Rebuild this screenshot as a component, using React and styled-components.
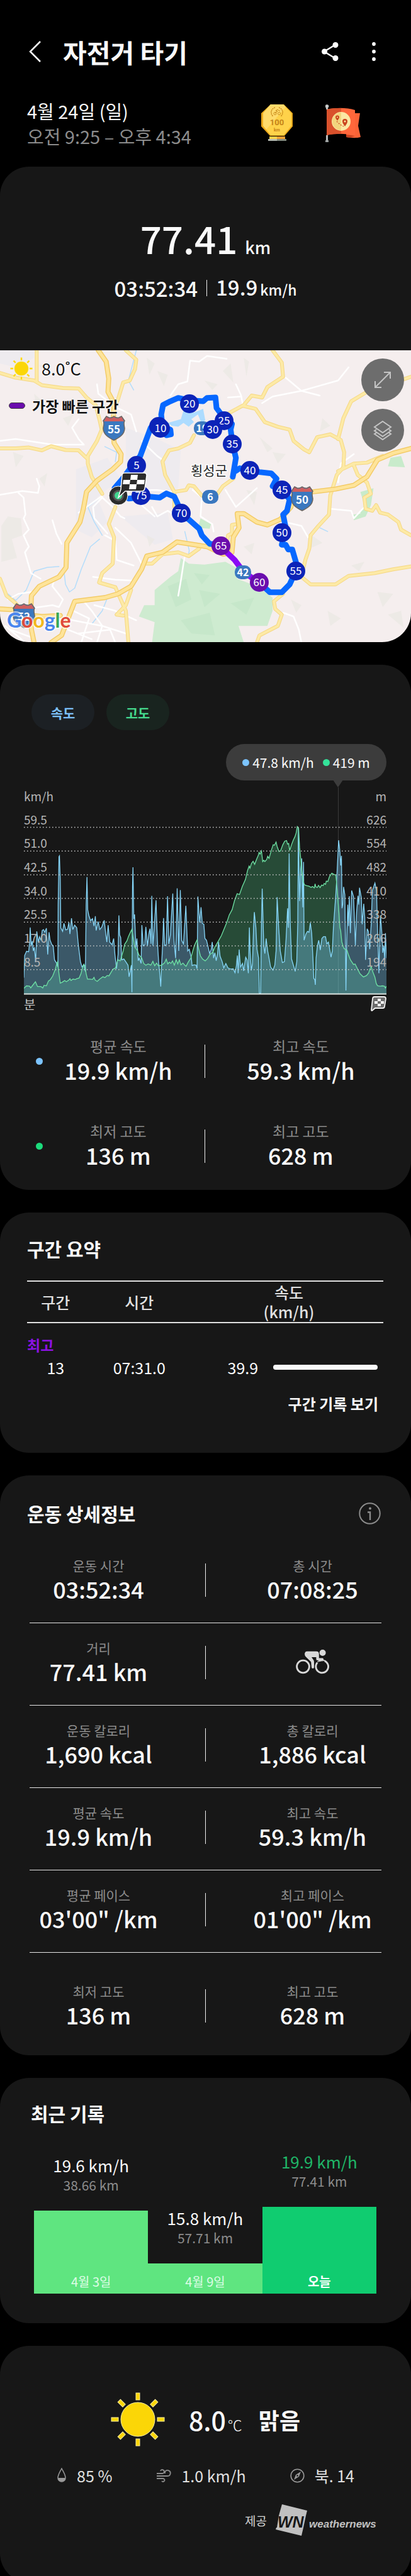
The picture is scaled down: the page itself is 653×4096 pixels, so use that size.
import React from "react";
import styled, { createGlobalStyle } from "styled-components";

const GlobalStyle = createGlobalStyle`
	* {
		box-sizing: border-box;
	}
	body {
		margin: 0;
		background: #000;
		color: #fafafa;
		font-family: "Noto Sans CJK KR", "Noto Sans", sans-serif;
	}
	button {
		padding: 0;
		border: none;
		background: none;
		color: inherit;
		font: inherit;
		cursor: pointer;
	}
	svg {
		display: block;
	}
`;

/**
 * Page and header
 */
const Page = styled.main`
	display: flex;
	flex-direction: column;
	gap: 36px;
	overflow: hidden;
`;

const TopBar = styled.header`
	display: flex;
	align-items: center;
	height: 48px;
	margin: 58px 42px 50px 40px;
`;

const IconButton = styled.button`
	display: flex;
	align-items: center;
	justify-content: center;
	width: ${({ $width }) => $width || 32}px;
	height: 48px;
`;

const PageTitle = styled.h1`
	flex: 1;
	margin: 0 0 0 28px;
	font-size: 41px;
	line-height: 48px;
	font-weight: 700;
`;

const Actions = styled.div`
	display: flex;
	gap: 37px;
`;

const Session = styled.div`
	display: flex;
	justify-content: space-between;
	align-items: center;
	padding: 0 80px 29px 43px;
`;

const SessionText = styled.div`
	font-size: 29px;
	line-height: 40px;
	color: ${({ $muted }) => ($muted ? "#8c8c8c" : "#fafafa")};
`;

const Awards = styled.div`
	display: flex;
	gap: 52px;
`;

/**
 * Cards
 */
const Card = styled.section`
	padding: ${({ $pad }) => $pad || "0"};
	border-radius: 46px;
	background: #171717;
`;

const LastCard = styled(Card)`
	margin-bottom: -10px;
`;

const CardHead = styled.div`
	display: flex;
	justify-content: space-between;
	align-items: center;
	height: 40px;
	padding: 0 48px 0 ${({ $indent }) => $indent || 43}px;
`;

const CardTitle = styled.h2`
	margin: 0;
	font-size: 30px;
	line-height: 40px;
	font-weight: 700;
`;

/**
 * Hero
 */
const Hero = styled.div`
	display: flex;
	flex-direction: column;
	align-items: center;
	gap: 9px;
	height: 292px;
	padding-top: 77px;
	border-radius: 46px 46px 0 0;
	background: #171717;
`;

const Distance = styled.div`
	font-size: 60px;
	line-height: 72px;
	font-weight: 500;

	small {
		margin-left: 12px;
		font-size: 27px;
	}
`;

const HeroLine = styled.div`
	display: flex;
	align-items: center;
	gap: 14px;
	font-size: 33px;
	line-height: 36px;
	font-weight: 500;

	small {
		margin-left: 4px;
		font-size: 23px;
	}
`;

const Divider = styled.span`
	width: 1px;
	height: ${({ $height }) => $height}px;
	background: #f0f0f0;
`;

/**
 * Map
 */
const MapFrame = styled.div`
	position: relative;
	overflow: hidden;
	border-radius: 0 0 46px 46px;
	background: #f5eeee;

	> svg {
		width: 100%;
	}
`;

const MapInfo = styled.div`
	position: absolute;
	top: 8px;
	left: 14px;
	display: flex;
	flex-direction: column;
	gap: 20px;
	color: #111;
`;

const MapWeather = styled.div`
	display: flex;
	align-items: center;
	gap: 14px;
	padding-left: 2px;
	font-size: 27px;
	line-height: 42px;
	text-shadow: 0 0 3px #fff, 0 0 3px #fff;
`;

const Legend = styled.div`
	display: flex;
	align-items: center;
	gap: 11px;
	font-size: 23px;
	line-height: 36px;
	font-weight: 700;
	text-shadow: 0 0 3px #fff, 0 0 3px #fff;
`;

const LegendSwatch = styled.span`
	width: 26px;
	height: 10px;
	border: 1px solid #444;
	border-radius: 5px;
	background: #6a0dad;
`;

const MapButtons = styled.div`
	position: absolute;
	top: 13px;
	right: 11px;
	display: flex;
	flex-direction: column;
	gap: 12px;
`;

const RoundButton = styled.button`
	display: flex;
	align-items: center;
	justify-content: center;
	width: 68px;
	height: 68px;
	border-radius: 50%;
	background: #6d6d6d;
`;

/**
 * Chart card
 */
const Chips = styled.div`
	display: flex;
	gap: 19px;
	padding-left: 50px;
`;

const Chip = styled.button`
	width: 100px;
	height: 57px;
	border-radius: 29px;
	background: ${({ $bg }) => $bg};
	color: ${({ $color }) => $color};
	font-size: 21px;
	font-weight: 700;
`;

const ChartWrap = styled.div`
	display: flex;
	flex-direction: column;
	padding: 22px 39px 0 38px;

	> svg {
		width: 100%;
	}
`;

const Tooltip = styled.div`
	position: relative;
	align-self: flex-end;
	display: flex;
	align-items: center;
	justify-content: center;
	gap: 5px;
	width: 255px;
	height: 58px;
	margin-bottom: 11px;
	border-radius: 29px;
	background: #3c3c3c;
	font-size: 21px;

	&::after {
		content: "";
		position: absolute;
		top: 57px;
		left: 170px;
		border: 8px solid transparent;
		border-top: 12px solid #3c3c3c;
		border-bottom: none;
	}

	span + i {
		margin-left: 9px;
	}
`;

const Dot = styled.i`
	flex: none;
	width: 11px;
	height: 11px;
	border-radius: 50%;
	background: ${({ $color }) => $color};
`;

const ChartFoot = styled.div`
	display: flex;
	justify-content: space-between;
	align-items: center;
	height: 28px;
	color: #c4c4c4;
	font-size: 20px;
`;

const AxisText = styled.text`
	fill: #b5b5b5;
	font-size: 19px;
`;

const ChartStats = styled.div`
	display: flex;
	flex-direction: column;
	gap: 58px;
	padding: 39px 23px 0 51px;
`;

/* the dot sits in a zero-width column, beside the centred text */
const ChartStat = styled.div`
	display: grid;
	grid-template-columns: 0 9fr 1px 10fr;
	align-items: center;

	> i {
		margin-left: 6px;
	}
`;

const Metric = styled.div`
	text-align: center;
`;

const MetricLabel = styled.div`
	color: #8c8c8c;
	font-size: ${({ $size }) => $size || 21}px;
	line-height: 28px;
`;

const MetricValue = styled.div`
	font-size: 36px;
	line-height: ${({ $height }) => $height || 46}px;
	font-weight: 500;
	white-space: nowrap;
`;

/**
 * Section table
 */
const Laps = styled.table`
	width: calc(100% - 87px);
	margin: 31px 44px 0 43px;
	border-collapse: collapse;
	table-layout: fixed;
	font-size: 25px;
	text-align: center;

	th,
	td {
		padding: 0;
	}

	th {
		height: 66px;
		border-top: 2px solid #e0e0e0;
		border-bottom: 2px solid #e0e0e0;
		color: #e0e0e0;
		font-weight: 500;
		line-height: 31px;
	}

	td {
		height: 36px;
		line-height: 36px;
	}

	th:nth-child(1) {
		width: 16%;
	}
	th:nth-child(2) {
		width: 31%;
	}
`;

const BestTag = styled.td`
	&& {
		height: 52px;
		padding-top: 16px;
		color: #8b12e3;
		font-size: 23px;
		font-weight: 700;
		text-align: left;
	}
`;

const Speed = styled.div`
	display: flex;
	align-items: center;
	justify-content: flex-end;
	gap: 24px;
	padding-right: 9px;
`;

const SpeedBar = styled.span`
	width: 57%;
	height: 8px;
	border-radius: 4px;
	background: #fafafa;
`;

const MoreButton = styled.button`
	display: block;
	margin: 22px 52px 0 auto;
	font-size: 24px;
	line-height: 36px;
	font-weight: 700;
`;

/**
 * Details
 */
const DetailList = styled.div`
	padding: 24px 47px 0;
`;

const DetailRow = styled.div`
	display: grid;
	grid-template-columns: 1fr 1px 1fr;
	column-gap: 60px;
	align-items: center;
	justify-items: center;
	padding: 25px 0 31px;
	border-bottom: 1px solid #e6e6e6;

	&:last-child {
		padding-top: 47px;
		border-bottom: none;
	}
`;

/**
 * Recent records
 */
const Bars = styled.div`
	display: flex;
	align-items: flex-end;
	margin: 39px 55px 0 54px;
`;

const BarColumn = styled.div`
	flex: 1;
	text-align: center;
`;

const BarSpeed = styled.div`
	font-size: 26px;
	line-height: 36px;
	color: ${({ $today }) => ($today ? "#1fb768" : "#fafafa")};
`;

const BarDistance = styled.div`
	margin-bottom: 28px;
	color: #8c8c8c;
	font-size: 21px;
	line-height: 26px;
`;

const Bar = styled.div`
	display: flex;
	align-items: flex-end;
	justify-content: center;
	padding-bottom: 6px;
	background: ${({ $today }) => ($today ? "#10cc70" : "#5fe580")};
	color: ${({ $today }) => ($today ? "#fff" : "#dcfce5")};
	font-size: 20px;
	line-height: 26px;
	font-weight: ${({ $today }) => ($today ? 700 : 400)};
`;

/**
 * Weather
 */
const WeatherNow = styled.div`
	display: flex;
	align-items: center;
	justify-content: center;
	height: 86px;
	font-weight: 500;
`;

const Temperature = styled.span`
	margin-left: 38px;
	font-size: 41px;

	small {
		margin-left: 3px;
		font-size: 23px;
		font-weight: 300;
	}
`;

const Condition = styled.strong`
	margin-left: 26px;
	font-size: 36px;
`;

const WeatherFacts = styled.ul`
	display: flex;
	justify-content: center;
	gap: 70px;
	margin: 28px 0;
	padding: 0;
	list-style: none;
	color: #e0e0e0;
	font-size: 25px;
	line-height: 36px;

	li {
		display: flex;
		align-items: center;
		gap: 16px;
	}
`;

const Provider = styled.div`
	display: flex;
	align-items: center;
	justify-content: flex-end;
	gap: 14px;
	padding-right: 51px;
	color: #d6d6d6;
	font-size: 19px;
`;

/**
 * Icons
 */
function SunIcon({ size }) {
	return (
		<svg width={size} height={size} viewBox="0 0 86 86">
			<g fill="#fbd607" stroke="#fdf0a0" strokeWidth="1">
				<circle cx="43" cy="43" r="27" />
				{[0, 45, 90, 135, 180, 225, 270, 315].map((angle) => (
					<rect
						key={angle}
						x="40"
						y="1"
						width="6"
						height="11"
						transform={`rotate(${angle} 43 43)`}
					/>
				))}
			</g>
		</svg>
	);
}

function MedalIcon() {
	return (
		<svg width="50" height="58" viewBox="0 0 50 58">
			<path d="M15 0h21l14 14v21L37 50H14L0 35V14z" fill="#eda91a" />
			<path d="M15 0h20l13 14v20L36 49H15L3 34V14z" fill="#ffd24a" />
			<path d="M15 0h20l4 4L8 40l-5-6V14z" fill="#ffdb6b" />
			<path d="M13 51h25v4H13z" fill="#f3a134" />
			<path d="M13 51h12v4H13z" fill="#ffd24a" />
			<path d="M11 55h29v3H11z" fill="#848c80" />
			<path d="M11 55h14v3H11z" fill="#b5bab2" />
			<g fill="none" stroke="#c98b1b" strokeWidth="1">
				<path
					d="M22 5c-7 2-8 10-3 14M28 5c7 2 8 10 3 14"
					strokeDasharray="2 1"
					strokeWidth="1.6"
				/>
				<circle cx="22" cy="14.500" r="2" />
				<circle cx="28.500" cy="14.500" r="2" />
				<path d="M22 14l4-3-3-1 3-2 2 2h2" />
			</g>
			<text
				x="25"
				y="33"
				textAnchor="middle"
				fontFamily="Roboto, sans-serif"
				fontSize="13"
				fontWeight="700"
				fill="#c58418"
			>
				100
			</text>
			<text
				x="25"
				y="43"
				textAnchor="middle"
				fontFamily="Roboto, sans-serif"
				fontSize="7"
				fontWeight="700"
				fill="#c58418"
			>
				km
			</text>
		</svg>
	);
}

function FlagIcon() {
	return (
		<svg width="56" height="60" viewBox="0 0 56 60">
			<path d="M46 14h9l-3 20 4 18c-8 2-15 1-23 0V40z" fill="#fb6437" />
			<path d="M33 48l14 2c-4 2-9 3-14 2z" fill="#c7421f" />
			<path d="M2 8c15-3 32-3 45 1v41c-15-4-30-4-45-1z" fill="#ff673b" />
			<path d="M2 8c8-2 15-2 23-2v41c-8 0-15 0-23 2z" fill="#d9512c" />
			<circle cx="25" cy="27" r="15" fill="#fbe8a4" />
			<path d="M25 13a14 14 0 0 0 0 28z" fill="#f2d57e" />
			<path
				d="M31 35c-3-4-4-6-4-8a4 4 0 0 1 8 0c0 2-1 4-4 8zM19 26c-2-3-3-4-3-5.500a3 3 0 0 1 6 0c0 1.500-1 2.500-3 5.500z"
				fill="#c9431e"
			/>
			<circle cx="31" cy="27" r="1.500" fill="#fbe6a1" />
			<circle cx="19" cy="20.500" r="1" fill="#fbe6a1" />
			<path
				d="M18 27l3 3 4 3 4 2"
				fill="none"
				stroke="#c9431e"
				strokeWidth="1.200"
				strokeDasharray="2 2"
			/>
			<path d="M1 5h3v3H1zM1 49h3v9H1z" fill="#b9bdbd" />
			<circle cx="2.500" cy="3" r="2.800" fill="#c6c9c9" />
			<path d="M0 57h5v3H0z" fill="#9da1a1" />
		</svg>
	);
}

function ShareIcon() {
	return (
		<svg width="27" height="30" viewBox="0 0 27 30" fill="#fff">
			<path d="M22 4L4 15l18 11" fill="none" stroke="#fff" strokeWidth="2.500" />
			<circle cx="22" cy="4.500" r="4.500" />
			<circle cx="4.500" cy="15" r="4.500" />
			<circle cx="22" cy="25.500" r="4.500" />
		</svg>
	);
}

function BikeIcon() {
	return (
		<svg width="54" height="40" viewBox="0 0 54 40" fill="#d9d9d9">
			<g fill="none" stroke="#d9d9d9" strokeWidth="2.800">
				<circle cx="11.500" cy="27" r="9.900" />
				<circle cx="41.700" cy="27" r="9.900" />
			</g>
			<path d="M32 18.500h6l6-1 2-1-1 3-10 2z" fill="#171717" />
			<path d="M34 19.500q6-2 12-2" fill="none" stroke="#d9d9d9" />
			<path d="M18 2.700h14.500q4.300 0 4.300 4.300v6.500h5.700q1.500.2 1.500 1.700t-1.500 1.700H34q-1.600 0-1.600-1.700V12H25l3.400 5q.6 1 .6 2.500V28q0 2-2 2t-2-2l-.8-8.500-7.700-7.500q-2.500-2.500-2.500-5 .4-4.300 4-4.300z" />
			<circle cx="42.600" cy="5" r="5" />
		</svg>
	);
}

/**
 * Route map
 */
const highways = [
	"M375 20L405 80 415 170 412 240 435 300 432 400 435 510 462 570 460 610 430 650 370 710 330 770 318 860 305 930 255 1040 252 1170 225 1220 150 1270 120 1320 117 1400 120 1500 130 1568",
	"M1568 540L1500 565 1440 600 1400 690 1350 735 1280 755 1190 770 1120 790 1110 850 1070 915 1020 945 980 930 930 885 905 885 912 960 890 1010 885 1090 850 1100 790 1060 675 1035 620 1090 560 1110 540 1180 500 1270 450 1310 400 1330 285 1350 260 1440 235 1530 195 1568",
	"M0 1390L60 1395 90 1420 160 1430 230 1425",
];

const roads = [
	"M0 140L60 165 130 180 160 205 240 220 300 222 330 270 365 310 380 390 388 440 370 500 335 580 335 620 350 690 390 780",
	"M140 20V180",
	"M480 20L520 70 515 120 495 180 470 190 450 280 430 340",
	"M0 540L60 540 110 535 160 550 195 528 250 548 300 550 330 590",
	"M1040 20L1075 85 1080 160 1020 215 1000 270 960 260 930 310 870 355",
	"M930 315L975 330 1010 400 1060 425 1105 440 1120 500 1160 545 1180 560 1210 480 1260 465 1300 495 1313 560 1310 640 1285 680 1260 790 1255 890 1215 950 1185 1000 1180 1070 1165 1130 1150 1220 1185 1260 1280 1260 1330 1215 1430 1200 1500 1180 1568 1165",
	"M1290 490L1310 380 1340 290 1400 240 1568 160",
	"M1290 660L1350 620 1400 615 1460 580",
	"M1350 630L1365 680 1400 720 1415 780 1390 800 1395 860 1420 870 1435 840 1450 880 1480 890 1520 930 1530 970 1568 1000",
	"M740 470L725 510 680 540 645 550 620 610 630 680 665 770 710 760 720 735 740 740 770 790 830 780 850 740 890 700",
	"M665 780L665 850 690 880",
	"M440 850L415 940 435 1010 430 1150 390 1200 378 1250 440 1275 480 1400 490 1568",
	"M500 1290L480 1370 445 1420 470 1425",
	"M905 940L885 945 885 990 870 1000 860 1100",
	"M550 1150L580 1150 620 1100 680 1090 720 1110 760 1070",
	"M1080 1310L1045 1350 1050 1390 1075 1420 1060 1480 990 1530 980 1568",
	"M0 1230L25 1320 60 1360 80 1400",
];

const lanes = [
	"M650 260L680 200 715 185 725 75 760 80 790 50 865 65",
	"M1090 165L1150 235 1290 180 1330 110",
	"M1000 300L1040 265 1150 235 1220 260",
	"M300 385L275 430 300 490 320 520 200 520 60 490 0 500",
	"M370 200L375 250 440 320 500 360 520 450",
	"M0 785L85 765 145 775 150 740 140 700",
	"M70 775L90 800 97 890 90 910 110 970 90 1000 110 1060 95 1090 118 1200 155 1230",
	"M200 920L215 990 235 1045",
	"M440 960L500 1040 540 1150",
	"M680 1320L690 1240 700 1150 705 1110",
	"M735 760L770 800 765 900 810 940 815 980",
	"M540 500L600 580 620 600",
	"M390 790L340 840 300 880",
	"M390 800L355 850 360 910 410 990",
	"M390 800L430 850 460 900 475 910",
	"M400 1000L440 1030 445 1130 510 1160",
	"M580 850L600 900 640 870 700 920",
	"M1265 860L1340 870 1350 910 1390 850",
	"M1290 720L1300 620 1350 570",
	"M860 760L900 850 980 750",
	"M1090 930L1150 950 1175 1010",
	"M30 1340L70 1310 120 1300 140 1290",
	"M100 1390L200 1370 225 1380 240 1340 200 1270 210 1220",
	"M280 1400L340 1440 310 1568M240 1440L390 1480 370 1568M300 1520L420 1500 440 1568M260 1500L350 1550",
	"M320 1350L350 1400 390 1480 480 1520M360 1370L440 1400 520 1450",
	"M40 1500L120 1540M20 1480L90 1560",
	"M1080 1410L1120 1430 1140 1500 1150 1568",
	"M900 200L920 260 925 300",
	"M870 270L920 265",
	"M480 760L600 760 660 770M540 840L590 900",
	"M355 1220L440 1235 510 1240",
];

const streams = [
	"M520 20L490 180 510 230",
	"M400 530L445 560 440 610",
	"M30 1310L60 1345 100 1290 130 1190 180 1170 225 1165",
	"M245 1200L250 1260 265 1300 285 1280 310 1180 345 1060 380 1020",
	"M390 790L335 850 360 930 390 1000",
	"M410 1330L390 1400 350 1470",
	"M1220 960L1250 980",
	"M705 980L722 1080 720 1100",
];

const hills = [
	"M560 60l30 30-20 60zM600 130l40 20-15 60zM850 130l30-40 10 100zM930 60l20 20-10 80zM780 180l50 20-20 30z",
	"M50 560l40 20-30 60zM130 250l40 50-30 30zM240 380l40-20-20 60zM150 100l30-10-10 40z",
	"M1230 380l30 40-40 30zM1430 240l30-40 10 90zM1490 350l40 10-20 60zM1040 560l50 10-30 50zM990 480l50 60-20 20z",
	"M1190 1000l40 40-50 30zM930 1060l40-20-10 60zM1440 1300l60 10-40 70zM1340 1160l50-20-20 50zM1250 1400l50 40-40 40zM1480 1420l50-20 10 90z",
	"M30 900l50 10 5 90-40 20 20 100-60 20V950zM150 700l30-30-10 70zM560 1000l30 20-20 40zM940 760l40 10-10 70zM1110 1340l40 30-20 40z",
];

const markers = [
	[5, 217, 183],
	[10, 255, 124],
	[20, 301, 85],
	[25, 356, 112],
	[30, 338, 126],
	[35, 369, 149],
	[40, 397, 191],
	[45, 448, 222],
	[50, 448, 290],
	[55, 470, 351],
	[60, 412, 369, true],
	[65, 351, 311, true],
	[70, 288, 259],
	[75, 224, 231],
];

const MapLine = styled.path`
	fill: none;
	stroke-linejoin: round;
	stroke-linecap: round;
	vector-effect: non-scaling-stroke;
`;

const MapText = styled.text`
	text-anchor: middle;
	fill: #fff;
`;

const PlaceName = styled(MapText)`
	fill: #222;
	stroke: #fff;
	stroke-width: 3px;
	paint-order: stroke;
	font-size: 21px;
`;

const MapBrand = styled.text`
	fill: #4a86ee;
	stroke: rgba(255, 255, 255, 0.6);
	stroke-width: 4px;
	paint-order: stroke;
	font-family: Lato, sans-serif;
	font-size: 32px;
	font-weight: 700;
`;

function Interstate({ x, y, children }) {
	return (
		<g transform={`translate(${x} ${y})`}>
			<path
				d="M-12-20l4 2q4 1 8-2 4 3 8 2l4-2 5 7c-2 3-1 7 0 12 0 10-9 15-17 19-8-4-17-9-17-19 1-5 2-9 0-12z"
				fill="#3b78bf"
				stroke="#6a6560"
				strokeWidth="1.500"
			/>
			<path d="M-12-19l4 2q4 1 8-2 4 3 8 2l4-2 4 7h-32z" fill="#cf5f5f" />
			<MapText y="7" fontSize="17" fontWeight="700">
				{children}
			</MapText>
		</g>
	);
}

function RouteMap() {
	return (
		<svg viewBox="0 0 653 464" role="img" aria-label="경로 지도">
			<g transform="scale(.41645 .3002) translate(0 -20)">
				<path
					d="M0 20h130v40L60 110 0 90zM480 430l120 60 90 60-10 200-60 40-60-20-80-100zM290 650l120-60 50 110-90 100 40 130-60 80-60-40zM460 900l180-20 20 140-70 30z"
					fill="#eeebef"
				/>
				<path d={hills.join("")} fill="#ebe8e3" opacity=".8" />
				<path
					d="M690 1120L720 1150 780 1155 860 1140 900 1170 905 1230 980 1270 1040 1330 1040 1400 1020 1480 910 1480 930 1568H580L590 1460 530 1430 550 1370 590 1370 590 1290 650 1220 680 1190z"
					fill="#ceebd0"
				/>
				<path
					d="M640 1270l70-40 20 110-60 40zM760 1290l80 20-60 70zM880 1360l90-30-30 90zM690 1450l110-40 20 120-90-10zM740 1200l60 10-30 50z"
					fill="#c6e7ca"
				/>
				<path
					d="M765 910l40 30-5 25-45-5zM1375 870l15-30-15-70 50-20-10 90-20 60-45 20-5-30 30-5zM1490 590l40-10 15 60-65-5z"
					fill="#c8ebcb"
				/>
				<path
					d="M640 405L690 385 700 340 740 350 775 330 783 390 770 410 755 360 730 385 740 400 720 425 700 405 680 425 655 420z"
					fill="#addcff"
				/>
				{streams.map((d) => (
					<MapLine key={d} d={d} stroke="#b4ddfb" strokeWidth="1.500" />
				))}
				{lanes.map((d) => (
					<MapLine key={d} d={d} stroke="#fff" strokeWidth="2.500" />
				))}
				{roads.map((d) => (
					<MapLine key={d} d={d} stroke="#f5d783" strokeWidth="6" />
				))}
				{roads.map((d) => (
					<MapLine key={d} d={d} stroke="#fdeaa6" strokeWidth="4" />
				))}
				{highways.map((d) => (
					<MapLine key={d} d={d} stroke="#f3cb67" strokeWidth="8" />
				))}
				{highways.map((d) => (
					<MapLine key={d} d={d} stroke="#fee49a" strokeWidth="5" />
				))}
				<MapLine
					d="M437 750L465 705 500 640 535 580 575 430 605 415 650 440 652 465 635 470 610 430 618 400 615 360 622 310 650 290 680 272 724 285 775 290 790 272 822 270 826 325 850 370 885 410 880 440 887 515 900 590 888 690 892 665 915 645 990 665 1035 672 1055 700 1040 740 1077 761 1105 810 1095 870 1080 890 1090 960 1075 1050 1090 1050 1100 1075 1115 1075 1135 1170 1105 1260 1075 1302 1030 1302 989 1251"
					stroke="#0768ff"
					strokeWidth="9"
				/>
				<MapLine
					d="M989 1251L930 1195 895 1130 842 1060"
					stroke="#8a0af5"
					strokeWidth="9"
				/>
				<MapLine
					d="M842 1050L800 1045 770 1000 760 965 695 885 665 795 635 778 610 800 570 795 490 805"
					stroke="#0768ff"
					strokeWidth="9"
				/>
			</g>

			<Interstate x={181} y={125}>55</Interstate>
			<Interstate x={480} y={237}>50</Interstate>
			<Interstate x={38} y={423}>52</Interstate>
			{[
				[19, 321, 124],
				[6, 334, 233],
				[42, 386, 353],
			].map(([label, x, y]) => (
				<g key={label}>
					<rect
						x={x - 13}
						y={y - 11}
						width="26"
						height="22"
						rx="10"
						fill="#3b78bf"
					/>
					<MapText x={x} y={y + 6} fontSize="16" fontWeight="700">
						{label}
					</MapText>
				</g>
			))}
			<PlaceName x="332" y="199">횡성군</PlaceName>
			<circle cx="252" cy="121" r="15" fill="#0c24b8" />
			{markers.map(([label, x, y, fastest]) => (
				<g key={label}>
					<circle cx={x} cy={y} r="15" fill={fastest ? "#6a0dad" : "#0c24b8"} />
					<MapText x={x} y={y + 6} fontSize="17">
						{label}
					</MapText>
				</g>
			))}

			<circle cx="188" cy="231" r="15" fill="#2b2b2b" stroke="#fff" />
			<circle cx="188" cy="231" r="9" fill="#555" />
			<circle cx="188" cy="231" r="6" fill="#41d68f" />
			<path
				d="M198 195h31q4 0 4 4l-3 21q-1 4-5 4h-26l-11 10 4-13 2-22q0-4 4-4z"
				fill="#2b2b2b"
				stroke="#fff"
				strokeWidth="1.500"
			/>
			<path
				d="M208 198h11l-1 8h-11zM196 206h11l-1 7h-11zM218 206h12l-1 7h-12zM206 213h11l-1 8h-11z"
				fill="#fff"
			/>

			<MapBrand x="11" y="441">
				G<tspan fill="#e04a3a">o</tspan><tspan fill="#f2b91d">o</tspan>g<tspan fill="#3aa757">l</tspan><tspan fill="#e04a3a">e</tspan>
			</MapBrand>
		</svg>
	);
}

/**
 * Speed and altitude chart, samples are [offset, height]
 */
const altitude = [
	[90, 30], [100, 44], [112, 42], [116, 32], [122, 44], [134, 67], [142, 40],
	[155, 40], [162, 32], [167, 47], [176, 44], [184, 72], [190, 77], [200, 99],
	[210, 137], [216, 172], [219, 180], [224, 112], [229, 59], [236, 64],
	[246, 74], [252, 67], [262, 77], [266, 84], [270, 74], [278, 82], [286, 79],
	[292, 84], [301, 88], [308, 112], [315, 150], [319, 164], [323, 157],
	[328, 112], [333, 82], [342, 82], [352, 80], [358, 92], [362, 77], [370, 69],
	[380, 82], [392, 95], [400, 90], [408, 102], [415, 100], [422, 117],
	[430, 137], [440, 144], [446, 177], [450, 190], [458, 184], [462, 202],
	[470, 242], [475, 277], [484, 297], [490, 322], [497, 344], [503, 362],
	[508, 312], [514, 262], [522, 247], [530, 217], [540, 202], [548, 170],
	[556, 160], [565, 167], [575, 160], [583, 182], [590, 157], [597, 172],
	[604, 157], [613, 159], [620, 164], [628, 174], [634, 194], [640, 167],
	[646, 177], [652, 170], [658, 184], [665, 160], [672, 192], [678, 167],
	[684, 190], [690, 162], [698, 172], [705, 160], [710, 154], [718, 177],
	[728, 200], [735, 237], [742, 272], [752, 302], [757, 257], [765, 212],
	[773, 194], [783, 184], [792, 197], [802, 222], [812, 232], [820, 262],
	[834, 297], [845, 327], [855, 362], [866, 402], [875, 442], [886, 472],
	[895, 522], [905, 562], [914, 557], [925, 602], [937, 642], [945, 692],
	[951, 717], [954, 705], [960, 732], [966, 744], [972, 727], [980, 757],
	[986, 777], [989, 794], [993, 784], [998, 802], [1003, 742], [1007, 750],
	[1011, 742], [1018, 754], [1022, 772], [1027, 760], [1036, 807],
	[1043, 837], [1048, 834], [1054, 852], [1058, 827], [1065, 799],
	[1071, 802], [1080, 837], [1087, 857], [1094, 860], [1098, 840],
	[1102, 844], [1106, 805], [1113, 837], [1120, 864], [1126, 882],
	[1131, 904], [1135, 939], [1140, 930], [1144, 822], [1148, 762],
	[1152, 692], [1157, 637], [1162, 612], [1170, 607], [1180, 604],
	[1188, 597], [1193, 602], [1200, 594], [1203, 617], [1206, 600],
	[1212, 597], [1216, 609], [1222, 596], [1228, 610], [1234, 607],
	[1238, 619], [1243, 614], [1246, 632], [1252, 630], [1258, 657],
	[1267, 677], [1275, 670], [1282, 666], [1285, 632], [1290, 542],
	[1295, 442], [1298, 372], [1301, 352], [1305, 292], [1313, 254],
	[1325, 244], [1330, 222], [1338, 190], [1350, 164], [1356, 167],
	[1365, 140], [1375, 112], [1388, 94], [1400, 102], [1408, 117],
	[1413, 140], [1418, 152], [1424, 122], [1432, 92], [1437, 57], [1442, 45],
	[1452, 42], [1460, 44], [1468, 42], [1472, 32], [1476, 42],
];

const speed = [
	[90, 90], [93, 215], [100, 238], [108, 235], [112, 290], [114, 372],
	[118, 270], [122, 295], [126, 240], [130, 262], [135, 180], [139, 350],
	[145, 290], [150, 320], [155, 300], [160, 355], [165, 360], [170, 345],
	[176, 368], [181, 220], [186, 345], [190, 300], [197, 275], [202, 270],
	[207, 190], [216, 168], [220, 150], [221, 500], [224, 770], [226, 775],
	[229, 640], [231, 370], [238, 350], [243, 395], [250, 358], [257, 362],
	[262, 400], [266, 335], [272, 424], [277, 360], [284, 385], [292, 370],
	[297, 290], [301, 240], [306, 180], [312, 150], [319, 165], [325, 125],
	[328, 500], [331, 655], [334, 470], [338, 440], [345, 410], [352, 422],
	[358, 380], [363, 435], [366, 355], [374, 405], [380, 360], [388, 375],
	[397, 412], [402, 345], [407, 290], [412, 385], [418, 290], [427, 275],
	[433, 310], [438, 220], [444, 140], [450, 220], [453, 440], [456, 330],
	[460, 315], [464, 190], [472, 195], [480, 178], [488, 160], [492, 95],
	[498, 140], [501, 160], [503, 8], [505, 600], [507, 710], [510, 420],
	[513, 445], [518, 260], [522, 310], [527, 185], [531, 200], [538, 170],
	[541, 385], [546, 270], [552, 275], [556, 375], [562, 270], [568, 340],
	[572, 365], [576, 280], [579, 550], [583, 270], [588, 370], [595, 525],
	[600, 300], [605, 180], [610, 100], [613, 40], [617, 180], [621, 300],
	[624, 425], [628, 270], [634, 275], [639, 548], [644, 280], [650, 330],
	[655, 460], [659, 563], [664, 290], [670, 200], [676, 592], [682, 240],
	[688, 582], [693, 300], [700, 280], [709, 494], [716, 240], [722, 250],
	[730, 200], [733, 158], [740, 162], [748, 160], [752, 140], [755, 546],
	[760, 440], [762, 400], [767, 486], [772, 395], [778, 390], [782, 310],
	[788, 300], [793, 270], [800, 225], [806, 250], [810, 290], [815, 200],
	[820, 230], [825, 185], [830, 220], [834, 290], [840, 210], [848, 180],
	[854, 145], [862, 170], [870, 145], [880, 138], [890, 140], [897, 118],
	[902, 155], [906, 215], [909, 115], [913, 248], [918, 150], [926, 170],
	[930, 128], [938, 205], [943, 190], [948, 115], [952, 372], [955, 230],
	[959, 130], [964, 170], [968, 380], [971, 458], [977, 370], [981, 250],
	[987, 200], [990, 2], [995, 2], [998, 400], [1001, 590], [1007, 270],
	[1011, 225], [1016, 310], [1022, 240], [1027, 200], [1033, 150],
	[1042, 132], [1049, 160], [1054, 240], [1058, 542], [1064, 370],
	[1070, 240], [1078, 175], [1086, 180], [1092, 300], [1098, 480],
	[1101, 370], [1104, 788], [1108, 400], [1113, 195], [1119, 165],
	[1127, 125], [1133, 180], [1137, 400], [1139, 930], [1144, 520],
	[1148, 700], [1152, 760], [1155, 560], [1156, 485], [1159, 740],
	[1161, 300], [1168, 335], [1174, 350], [1180, 345], [1185, 398],
	[1190, 340], [1195, 200], [1198, 85], [1202, 80], [1204, 50], [1207, 200],
	[1212, 270], [1217, 300], [1223, 245], [1229, 310], [1235, 320],
	[1243, 320], [1248, 280], [1254, 290], [1260, 240], [1264, 205],
	[1269, 240], [1273, 370], [1278, 470], [1282, 550], [1286, 650],
	[1289, 740], [1293, 862], [1298, 800], [1301, 720], [1304, 775],
	[1306, 480], [1309, 500], [1312, 600], [1317, 555], [1319, 300],
	[1321, 18], [1324, 300], [1328, 500], [1331, 380], [1334, 548],
	[1338, 340], [1343, 580], [1350, 545], [1354, 400], [1357, 270],
	[1362, 460], [1367, 550], [1370, 500], [1373, 595], [1380, 540],
	[1383, 390], [1389, 505], [1393, 430], [1396, 190], [1402, 365],
	[1407, 350], [1412, 250], [1418, 400], [1422, 580], [1427, 600],
	[1432, 622], [1438, 580], [1442, 350], [1447, 115], [1450, 300],
	[1453, 440], [1458, 350], [1462, 230], [1466, 270], [1469, 190],
	[1472, 340], [1476, 200],
];

const BASE = 328;
const toPoints = (samples) =>
	samples
		.map(
			([x, h]) =>
				`${((x - 90) * 0.4156).toFixed(1)},${(BASE - h * 0.283).toFixed(1)}`
		)
		.join(" ");

const ticks = [
	["59.5", "626"],
	["51.0", "554"],
	["42.5", "482"],
	["34.0", "410"],
	["25.5", "338"],
	["17.0", "266"],
	["8.5", "194"],
];

function RideChart() {
	const altitudePoints = toPoints(altitude);
	const speedPoints = toPoints(speed);

	return (
		<svg viewBox="0 0 576 330" role="img" aria-label="속도 및 고도 그래프">
			<path d="M499.500 0V328" stroke="#3a3a3a" />
			<polygon
				points={`0,${BASE} ${altitudePoints} 576,${BASE}`}
				fill="#56db91"
				opacity=".27"
			/>
			<polygon
				points={`0,${BASE} ${speedPoints} 576,${BASE}`}
				fill="#7fd0ff"
				opacity=".35"
			/>
			<polyline
				points={speedPoints}
				fill="none"
				stroke="#86d6f8"
				strokeWidth="1.300"
			/>
			<polyline
				points={altitudePoints}
				fill="none"
				stroke="#6fe3a5"
				strokeWidth="1.300"
			/>
			<AxisText x="0" y="22">km/h</AxisText>
			<AxisText x="576" y="22" textAnchor="end">m</AxisText>
			{ticks.map(([left, right], i) => {
				const y = 63.5 + i * 37.7;
				return (
					<g key={left}>
						<path
							d={`M0 ${y}H576`}
							stroke="#c8c8c8"
							strokeWidth="1.500"
							strokeDasharray="1.500 3.500"
						/>
						<AxisText x="0" y={y - 5}>{left}</AxisText>
						<AxisText x="576" y={y - 5} textAnchor="end">{right}</AxisText>
					</g>
				);
			})}
			<path d="M0 328.500H576" stroke="#dbe3df" strokeWidth="2" />
		</svg>
	);
}

function MetricCell({ label, value, labelSize, valueHeight }) {
	return (
		<Metric>
			<MetricLabel $size={labelSize}>{label}</MetricLabel>
			<MetricValue $height={valueHeight}>{value}</MetricValue>
		</Metric>
	);
}

const chartStats = [
	["#7cc4ff", "평균 속도", "19.9 km/h", "최고 속도", "59.3 km/h"],
	["#1cdc7c", "최저 고도", "136 m", "최고 고도", "628 m"],
];

const details = [
	["운동 시간", "03:52:34", "총 시간", "07:08:25"],
	["거리", "77.41 km"],
	["운동 칼로리", "1,690 kcal", "총 칼로리", "1,886 kcal"],
	["평균 속도", "19.9 km/h", "최고 속도", "59.3 km/h"],
	["평균 페이스", "03'00\" /km", "최고 페이스", "01'00\" /km"],
	["최저 고도", "136 m", "최고 고도", "628 m"],
];

const records = [
	{ date: "4월 3일", speed: "19.6 km/h", distance: "38.66 km", height: 132 },
	{ date: "4월 9일", speed: "15.8 km/h", distance: "57.71 km", height: 48 },
	{ date: "오늘", speed: "19.9 km/h", distance: "77.41 km", height: 138, today: true },
];

export default function App() {
	return (
		<Page>
			<GlobalStyle />
			<div>
				<TopBar>
					<IconButton aria-label="뒤로">
						<svg width="20" height="34" viewBox="0 0 20 34">
							<path
								d="M18 1L2 17l16 16"
								fill="none"
								stroke="#fff"
								strokeWidth="2.500"
							/>
						</svg>
					</IconButton>
					<PageTitle>자전거 타기</PageTitle>
					<Actions>
						<IconButton aria-label="공유">
							<ShareIcon />
						</IconButton>
						<IconButton $width={34} aria-label="더보기">
							<svg width="6" height="30" viewBox="0 0 6 30" fill="#fff">
								<circle cx="3" cy="3" r="2.900" />
								<circle cx="3" cy="15" r="2.900" />
								<circle cx="3" cy="27" r="2.900" />
							</svg>
						</IconButton>
					</Actions>
				</TopBar>
				<Session>
					<div>
						<SessionText>4월 24일 (일)</SessionText>
						<SessionText $muted>오전 9:25 – 오후 4:34</SessionText>
					</div>
					<Awards>
						<MedalIcon />
						<FlagIcon />
					</Awards>
				</Session>
				<Hero>
					<Distance>
						77.41<small>km</small>
					</Distance>
					<HeroLine>
						<span>03:52:34</span>
						<Divider $height={26} />
						<span>
							19.9<small>km/h</small>
						</span>
					</HeroLine>
				</Hero>
				<MapFrame>
					<RouteMap />
					<MapInfo>
						<MapWeather>
							<SunIcon size={36} />
							8.0˚C
						</MapWeather>
						<Legend>
							<LegendSwatch />
							가장 빠른 구간
						</Legend>
					</MapInfo>
					<MapButtons>
						<RoundButton aria-label="지도 확대">
							<svg width="28" height="28" viewBox="0 0 28 28">
								<path
									d="M2 26L26 2M16 2h10v10M2 16v10h10"
									fill="none"
									stroke="#c4c4c4"
									strokeWidth="2"
								/>
							</svg>
						</RoundButton>
						<RoundButton aria-label="지도 종류">
							<svg width="32" height="32" viewBox="0 0 32 32">
								<path
									d="M16 2l13 9-13 9L3 11zM6 15l-3 2 13 9 13-9-3-2M6 20l-3 2 13 9 13-9-3-2"
									fill="none"
									stroke="#c4c4c4"
									strokeWidth="2"
								/>
							</svg>
						</RoundButton>
					</MapButtons>
				</MapFrame>
			</div>

			<Card $pad="47px 0 31px">
				<Chips>
					<Chip $bg="#1c2024" $color="#7cc0fb">속도</Chip>
					<Chip $bg="#19241f" $color="#45d98d">고도</Chip>
				</Chips>
				<ChartWrap>
					<Tooltip>
						<Dot $color="#7cc4ff" />
						<span>47.8 km/h</span>
						<Dot $color="#34e39a" />
						<span>419 m</span>
					</Tooltip>
					<RideChart />
					<ChartFoot>
						분
						<svg width="25" height="24" viewBox="0 0 25 24">
							<path
								d="M6 1h15q3 0 3 3l-2 12q0 3-3 3H7l-5 4q-1 0-1-1L3 4q0-3 3-3z"
								fill="#6d6d6d"
								stroke="#f2f2f2"
								strokeWidth="1.800"
							/>
							<path
								d="M11 4h5v4h-5zM6 8h5v4H6zM16 8h5v4h-5zM11 12h5v4h-5z"
								fill="#fff"
							/>
						</svg>
					</ChartFoot>
				</ChartWrap>
				<ChartStats>
					{chartStats.map(([color, label, value, label2, value2]) => (
						<ChartStat key={label}>
							<Dot $color={color} />
							<MetricCell
								label={label}
								value={value}
								labelSize={23}
								valueHeight={49}
							/>
							<Divider $height={53} />
							<MetricCell
								label={label2}
								value={value2}
								labelSize={23}
								valueHeight={49}
							/>
						</ChartStat>
					))}
				</ChartStats>
			</Card>

			<Card $pad="37px 0 60px">
				<CardHead>
					<CardTitle>구간 요약</CardTitle>
				</CardHead>
				<Laps>
					<thead>
						<tr>
							<th>구간</th>
							<th>시간</th>
							<th>
								속도
								<br />
								(km/h)
							</th>
						</tr>
					</thead>
					<tbody>
						<tr>
							<BestTag colSpan="3">최고</BestTag>
						</tr>
						<tr>
							<td>13</td>
							<td>07:31.0</td>
							<td>
								<Speed>
									39.9
									<SpeedBar />
								</Speed>
							</td>
						</tr>
					</tbody>
				</Laps>
				<MoreButton>구간 기록 보기</MoreButton>
			</Card>

			<Card $pad="40px 0 11px">
				<CardHead>
					<CardTitle>운동 상세정보</CardTitle>
					<IconButton $width={35} aria-label="정보">
						<svg width="35" height="35" viewBox="0 0 35 35">
							<g fill="none" stroke="#8c8c8c" strokeWidth="2">
								<circle cx="17.500" cy="17.500" r="16.200" />
								<path d="M14 15.500h4V28" strokeWidth="2.400" />
							</g>
							<circle cx="18" cy="9.500" r="2" fill="#8c8c8c" />
						</svg>
					</IconButton>
				</CardHead>
				<DetailList>
					{details.map(([label, value, label2, value2]) => (
						<DetailRow key={label}>
							<MetricCell label={label} value={value} />
							<Divider $height={53} />
							{label2 ? (
								<MetricCell label={label2} value={value2} />
							) : (
								<BikeIcon />
							)}
						</DetailRow>
					))}
				</DetailList>
			</Card>

			<Card $pad="36px 0 47px">
				<CardHead $indent={49}>
					<CardTitle>최근 기록</CardTitle>
				</CardHead>
				<Bars>
					{records.map((record) => (
						<BarColumn key={record.date}>
							<BarSpeed $today={record.today}>{record.speed}</BarSpeed>
							<BarDistance>{record.distance}</BarDistance>
							<Bar $today={record.today} style={{ height: record.height }}>
								{record.date}
							</Bar>
						</BarColumn>
					))}
				</Bars>
			</Card>

			<LastCard $pad="74px 0">
				<WeatherNow>
					<SunIcon size={86} />
					<Temperature>
						8.0<small>℃</small>
					</Temperature>
					<Condition>맑음</Condition>
				</WeatherNow>
				<WeatherFacts>
					<li>
						<svg width="16" height="24" viewBox="0 0 16 24">
							<path
								d="M8 1c3 6 6 10 6 15a6 6 0 0 1-12 0C2 11 5 7 8 1z"
								fill="none"
								stroke="#9a9a9a"
								strokeWidth="1.500"
							/>
							<path d="M2 16h12a6 6 0 0 1-12 0z" fill="#9a9a9a" />
						</svg>
						85 %
					</li>
					<li>
						<svg width="24" height="22" viewBox="0 0 24 22">
							<path
								d="M1 8h9a3 3 0 1 0-3-4M1 12h17a4.500 4.500 0 1 0-4-6v2M1 16h10a2.500 2.500 0 1 1-2 4"
								fill="none"
								stroke="#8c8c8c"
								strokeWidth="1.800"
							/>
						</svg>
						1.0 km/h
					</li>
					<li>
						<svg width="23" height="23" viewBox="0 0 23 23">
							<circle
								cx="11.500"
								cy="11.500"
								r="10.300"
								fill="none"
								stroke="#9a9a9a"
								strokeWidth="1.600"
							/>
							<path d="M17 5l-3 8-8 5 3-8z" fill="#9a9a9a" />
							<circle cx="11.500" cy="11.500" r="1.300" fill="#171717" />
						</svg>
						북. 14
					</li>
				</WeatherFacts>
				<Provider>
					제공
					<svg width="164" height="50" viewBox="0 0 164 50">
						<path
							d="M10 0l40 10-2 8H5zM5 18h43l-4 19H2zM1 37h43l-3 13L0 40z"
							fill="#c0c0c0"
						/>
						<g
							fontFamily="Liberation Sans, sans-serif"
							fontWeight="700"
							fontStyle="italic"
						>
							<text x="3" y="37" fontSize="25" fill="#171717">WN</text>
							<text x="53" y="37" fontSize="17" fill="#c0c0c0">weathernews</text>
						</g>
					</svg>
				</Provider>
			</LastCard>
		</Page>
	);
}
